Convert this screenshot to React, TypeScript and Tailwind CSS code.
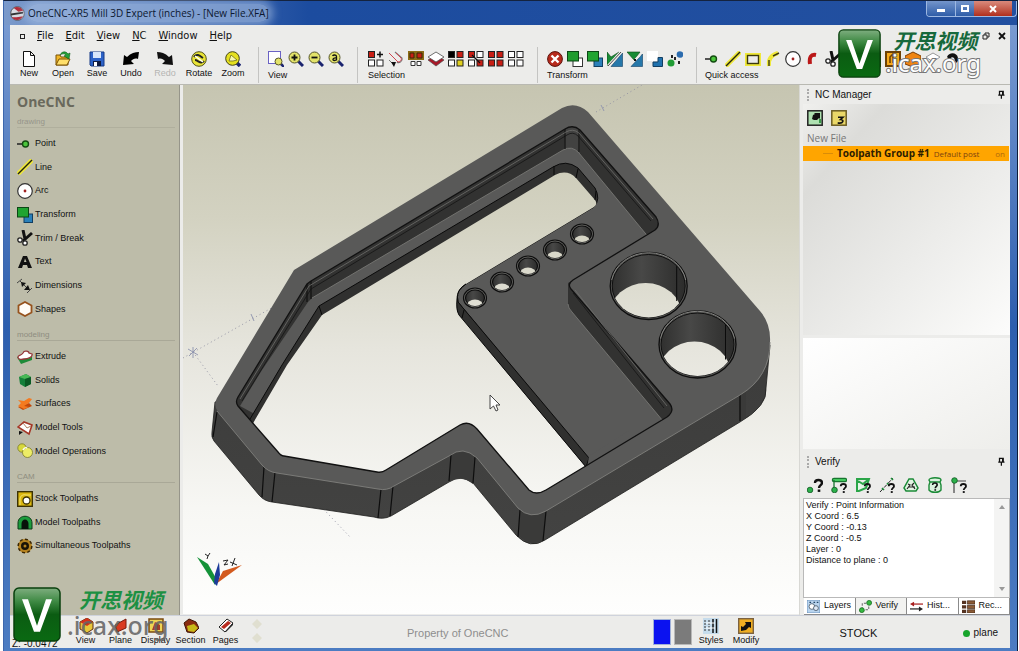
import { ReactNode, useState } from 'react';
import clsx from 'clsx';

const grid2 = (colors: string[]) => (
  <g stroke="#222" strokeWidth="1">
    <rect x=".5" y=".5" width="6" height="6" fill={colors[0]} />
    <rect x="9" y=".5" width="6" height="6" fill={colors[1]} />
    <rect x=".5" y="9" width="6" height="6" fill={colors[2]} />
    <rect x="9" y="9" width="6" height="6" fill={colors[3]} />
  </g>
);

const magnifier = (
  <>
    <path d="M10 10l5 5" stroke="#1b2470" strokeWidth="3" />
    <circle cx="6.5" cy="6.5" r="5.5" fill="#e3e36a" stroke="#55552a" />
  </>
);

const RED = '#c81e14';

const icons: Record<string, ReactNode> = {
  new: <path d="M2.5.5h7l4 4v11h-11zM9.500.5v4h4" fill="#fff" stroke="#111" />,
  open: (
    <>
      <path d="M1 14V4h4l1 2h7v8z" fill="#f0b628" stroke="#7a5205" />
      <path d="M1 14l3-6h11l-3 6z" fill="#ffdf6a" stroke="#7a5205" />
      <path d="M5 4c2-4 6-4 8-1l2-1-1 6-5-3 2-1c-2-2-4-1-6 0z" fill="#25a338" stroke="#0d5c1a" strokeWidth=".6" />
    </>
  ),
  save: (
    <>
      <path d="M1 1h14v14H2l-1-1z" fill="#2c62c8" stroke="#173a86" />
      <path d="M4 1h8v6H4z" fill="#d8e6fb" />
      <path d="M4 10h8v5H4z" fill="#101c40" />
      <path d="M5 11h3v4H5z" fill="#fff" />
    </>
  ),
  undo: <path d="M0 14L1 4l3 2c4-4 8-5 12-5l-1 7c-3-1-5 0-7 2l3 3z" fill="#000" />,
  redo: <path d="M16 14L15 4l-3 2C8 2 4 1 0 1l1 7c3-1 5 0 7 2l-3 3z" fill="#111" />,
  rotate: (
    <>
      <circle cx="8" cy="8" r="7.300" fill="#e8e336" stroke="#54531a" />
      <path d="M3 6c3-4 6-1 9 1M4 9c3 0 6 5 9 1" fill="none" stroke="#222" strokeWidth="2" />
      <path d="M4 5l8 6" stroke="#fff" strokeWidth="1.500" />
    </>
  ),
  zoom: (
    <>
      <path d="M10 10l5 5" stroke="#1b2470" strokeWidth="3.500" />
      <circle cx="7.500" cy="7.500" r="6.800" fill="#e5e020" stroke="#444416" />
      <path d="M4 10l2-6 6 5-4 1z" fill="#f8f8b0" stroke="#70701d" strokeWidth=".8" />
    </>
  ),
  zoomWindow: (
    <>
      <rect x=".5" y=".5" width="12" height="12" fill="#fff" stroke="#6a62c4" />
      <path d="M12 12l4 4" stroke="#1b2470" strokeWidth="2.500" />
      <circle cx="10.500" cy="10.500" r="3.500" fill="#e3e36a" stroke="#55552a" />
    </>
  ),
  zoomIn: <>{magnifier}<path d="M3.500 6.500h6M6.500 3.500v6" stroke="#111" strokeWidth="1.800" /></>,
  zoomOut: <>{magnifier}<path d="M3.500 6.500h6" stroke="#111" strokeWidth="1.800" /></>,
  zoomAll: (
    <>
      {magnifier}
      <path d="M4.500 5c1-1.500 4-1.300 4 .5v4M8.500 7c-4-.6-4.500 2.500-2 2.500 1 0 2-.7 2-1.500" fill="none" stroke="#111" strokeWidth="1.300" />
    </>
  ),
  selAdd: (
    <>
      {grid2([RED, 'none', '#fff', '#fff'])}
      <path d="M8 0h8v8H8z" fill="#ececea" />
      <path d="M9 3.500h6M12 .5v6" stroke="#111" strokeWidth="1.500" />
    </>
  ),
  selChain: (
    <>
      <path d="M7 1l7 6c1 3-3 6-5 4" fill="none" stroke="#777" strokeWidth="1.200" />
      <path d="M1 2l9 9c3 0 4-3 3-4L8 2" fill="none" stroke="#cf4450" />
      <path d="M1 9l4 4" stroke="#777" />
      <path d="M3 11l5 0-2 5z" fill="#111" />
    </>
  ),
  selGroup: (
    <>
      <rect x="0" y="0" width="16" height="9" fill="#8a6b16" />
      <path d="M2 2h4v5H2zM9 2h5v5H9z" fill={RED} stroke="#3a2906" />
      <path d="M3 10.500h4v4H3zM9 10.500h4v4H9z" fill="#fff" stroke="#333" />
    </>
  ),
  selLayer: (
    <>
      <path d="M0 9l8 6 8-6-8-5z" fill="#a91827" stroke="#4d4d4d" strokeWidth=".7" />
      <path d="M0 6l8 5 8-5-8-5z" fill="#fff" stroke="#4d4d4d" strokeWidth=".8" />
    </>
  ),
  selColor: grid2(['#000', RED, '#fff', '#e0d020']),
  selInvert: <>{grid2([RED, '#fff', '#fff', RED])}<path d="M4 4l8 8" stroke="#111" strokeWidth="1.300" /></>,
  selAll: grid2([RED, RED, RED, RED]),
  selNone: grid2(['#fff', '#fff', '#fff', '#fff']),
  cancel: (
    <>
      <circle cx="8" cy="8" r="7.400" fill="#b72a1c" stroke="#5b120b" />
      <path d="M4.500 4.500l7 7m0-7l-7 7" stroke="#fff" strokeWidth="2.400" />
    </>
  ),
  move: (
    <>
      <rect x="6" y="7" width="9.500" height="8.500" fill="#fff" stroke="#333" />
      <rect x=".5" y=".5" width="11" height="9.500" fill="#1f9c2e" stroke="#0c4715" />
    </>
  ),
  copy: (
    <>
      <rect x="7" y="7" width="8.500" height="8.500" fill="#2a80ba" stroke="#123e62" />
      <rect x=".5" y=".5" width="11" height="9.500" fill="#20a431" stroke="#0c4715" />
    </>
  ),
  mirror: (
    <>
      <path d="M0 15V1l4 5 8-5z" fill="#178b35" stroke="#0c4715" strokeWidth=".6" />
      <path d="M4 15.500L15.500 2v13.500z" fill="#2678aa" stroke="#123e62" strokeWidth=".6" />
      <path d="M1 15L14 1" stroke="#ececea" strokeWidth="2.600" />
      <path d="M1 15L14 1" stroke="#222" strokeWidth=".8" />
    </>
  ),
  mirrorCopy: (
    <>
      <path d="M0 1h13L7 9z" fill="#178b35" stroke="#0c4715" strokeWidth=".6" />
      <path d="M4 15.500L15.500 3v12.500z" fill="#2678aa" stroke="#123e62" strokeWidth=".6" />
      <path d="M3 14L13 4" stroke="#ececea" strokeWidth="2" />
      <path d="M7 8h2v2H7z" fill="#111" />
    </>
  ),
  scale: (
    <>
      <rect x="0" y="0" width="11" height="10" fill="#fff" />
      <path d="M6 15.500V11h5V6.500h4.500v9z" fill="#2072ae" stroke="#123e62" />
    </>
  ),
  array: (
    <>
      <circle cx="4" cy="12" r="3.500" fill="#219c35" />
      <circle cx="13" cy="3.500" r="3.300" fill="#2c6cae" />
      <path d="M4 4h2v3H4zM11 10h2v3h-2zM7 6h2v3H7z" fill="#222" />
    </>
  ),
  point: (
    <>
      <path d="M0 8h7" stroke="#222" strokeWidth="1.500" />
      <circle cx="8.500" cy="8" r="3" fill="#4cc63c" stroke="#154d12" strokeWidth="1.400" />
    </>
  ),
  line: (
    <>
      <path d="M1 15L15 1" stroke="#efe83a" strokeWidth="4.500" />
      <path d="M1 15L15 1" stroke="#25250c" strokeWidth="1.500" />
    </>
  ),
  rect: (
    <>
      <rect x="2" y="4" width="12" height="9" fill="none" stroke="#efe83a" strokeWidth="4" />
      <rect x="2.500" y="4.500" width="11" height="8" fill="#ececea" stroke="#3c3a0c" strokeWidth="1.400" />
    </>
  ),
  fillet: (
    <>
      <path d="M4 15C3 8 6 4 13 2" fill="none" stroke="#efe83a" strokeWidth="4" />
      <path d="M4 15V9M8 5l6-3" stroke="#3c3a0c" strokeWidth="1.400" />
    </>
  ),
  arc: (
    <>
      <circle cx="8" cy="8" r="7.300" fill="#fff" stroke="#333" strokeWidth="1.200" />
      <circle cx="8" cy="8" r="1.400" fill="#a02020" />
    </>
  ),
  curve: <path d="M5 13C4 6 6 3 11 4" fill="none" stroke="#bb1818" strokeWidth="4" />,
  trim: (
    <>
      <path d="M6 0l2 9M15 3l-9 8" stroke="#111" strokeWidth="3" />
      <circle cx="3" cy="10" r="2.200" fill="#fff" stroke="#222" strokeWidth="1.300" />
      <circle cx="8" cy="13" r="2.200" fill="#fff" stroke="#222" strokeWidth="1.300" />
    </>
  ),
  textA: <path d="M1 14L6 2h4l5 12h-4l-1-3H6l-1 3zM7 8h2.500L8 4.500z" fill="#111" fillRule="evenodd" />,
  dims: (
    <>
      <path d="M0 5l5-4M10 15l5-5M3 3l9 9" stroke="#444" strokeWidth="1" />
      <path d="M4 4l5 1-4 4zM13 12l-6 0 4-5z" fill="#111" />
    </>
  ),
  hex: <path d="M8 1l6.500 3.500v7L8 15l-6.500-3.500v-7z" fill="#fffdf8" stroke="#96521c" strokeWidth="1.800" />,
  extrude: (
    <>
      <path d="M0 8l4 7 11-4V6z" fill="#1e8b38" />
      <path d="M1 8c0-2 3-1 5-4 1-3 6-2 6 0l3 1c1 3-4 5-8 5-4 1-6 0-6-2z" fill="#fff" stroke="#96383a" strokeWidth="1.300" />
    </>
  ),
  solid: (
    <>
      <path d="M2 5l7-3 5 3v7l-6 3-5-3z" fill="#15803a" />
      <path d="M2 5l7-3 5 3-6 2z" fill="#49b856" />
      <path d="M8 7l6-2v7l-6 3z" fill="#0b5a24" />
    </>
  ),
  surface: (
    <>
      <path d="M1 11l5 3 9-4-3-3z" fill="#c2480a" />
      <path d="M1 4l6 1 5-3 3 1-3 4-5 3 5 1-5 2-6-3 3-3z" fill="#f47a20" />
    </>
  ),
  modelTools: (
    <>
      <path d="M1 7l6-5 8 3-3 9z" fill="#fff" stroke="#a43828" strokeWidth="1.600" />
      <path d="M6 3l4 5 4-2" fill="none" stroke="#b08060" />
      <path d="M2 11l4 1-4 3z" fill="#111" />
    </>
  ),
  modelOps: (
    <>
      <circle cx="5" cy="5" r="4.200" fill="#d7d83e" stroke="#7b7b28" strokeWidth=".8" />
      <circle cx="10.500" cy="9.500" r="5" fill="#eded66" stroke="#7b7b28" strokeWidth=".8" />
      <path d="M6 7c1-2 2-3 4-2" fill="none" stroke="#fff" strokeWidth="1.500" />
    </>
  ),
  stock: (
    <>
      <rect x=".7" y=".7" width="14.600" height="14.600" fill="#dcb80e" stroke="#3c3205" strokeWidth="1.400" />
      <path d="M3 14V8c0-3 3-5 6-4h5" fill="none" stroke="#f4e478" />
      <circle cx="9.500" cy="9.500" r="3.500" fill="#fff" stroke="#3c3205" strokeWidth="1.300" />
    </>
  ),
  arch: (
    <>
      <path d="M1 15V9C1 0 15 0 15 9v6z" fill="#1c9c3c" stroke="#0d3b18" />
      <path d="M4.500 15V10c0-6 7-6 7 0v5z" fill="#08120a" />
    </>
  ),
  simul: (
    <>
      <circle cx="8" cy="8" r="5.500" fill="#1a1206" stroke="#b58220" strokeWidth="3" />
      <circle cx="8" cy="8" r="6.800" fill="none" stroke="#3a2604" strokeWidth="1.500" strokeDasharray="3 2.300" />
      <circle cx="8" cy="8" r="1.500" fill="#b58220" />
    </>
  ),
  job: (
    <>
      <rect x="1" y="1" width="14" height="14" fill="#f5a91a" stroke="#6d4205" strokeWidth="2" />
      <path d="M5 12V6l3-3v9" fill="none" stroke="#6d4205" strokeWidth="1.600" />
    </>
  ),
  yellowBox: <rect x="1" y="1" width="14" height="14" fill="#f2d41c" stroke="#5a4a05" strokeWidth="2" />,
  orangeCube: <path d="M8 1l8 4v8l-8 3-8-3V5z" fill="#ef8412" stroke="#7c3d03" />,
  whiteCube: <path d="M8 2l7 4-7 5-7-5z" fill="#fff" stroke="#999" />,
  hook: <path d="M2 6c2-5 10-5 11 1l2 1-4 4-2-5c-2-2-4 0-4 2z" fill="#111" />,
  ncGo: (
    <>
      <rect x=".8" y=".8" width="14.400" height="14.400" fill="#aee0b0" stroke="#222" strokeWidth="1.500" />
      <path d="M5 9l1-4 2-1-1-1h6v6l-1-1-2 2H7z" fill="#111" />
      <path d="M12 13V9h2v4z" fill="#3a9a4a" />
    </>
  ),
  nc3: (
    <>
      <rect x=".8" y=".8" width="14.400" height="14.400" fill="#ead868" stroke="#6a5c22" strokeWidth="1.500" />
      <path d="M7 7.200h5l-2.500 2.300c4 .3 3 4.500-2.800 3.400" fill="none" stroke="#111" strokeWidth="1.600" />
    </>
  ),
  viewCube: (
    <>
      <path d="M2 4l7-4 6 4v7l-6 4-7-4z" fill="#e9c63a" stroke="#5c2a10" />
      <path d="M2 4l7-4 6 4-6 4z" fill="#d4301a" />
    </>
  ),
  plane: <path d="M2 7l11-6v9L4 14z" fill="#d93a20" stroke="#7a1a0c" />,
  display: (
    <>
      <rect x="1" y="1" width="14" height="13" fill="#efd455" stroke="#7a4a10" strokeWidth="1.500" />
      <path d="M4 12l3-8 5 3v5z" fill="#a33c2c" />
    </>
  ),
  section: (
    <>
      <path d="M1 5l5-4 7 3 3 6-5 5-7-1z" fill="#8a2c10" stroke="#3f1604" />
      <path d="M4 8l7-2 4 4-4 4-6-1z" fill="#c8b818" />
    </>
  ),
  pages: (
    <>
      <path d="M1 9l8-8 6 4-8 9z" fill="#fff" stroke="#222" />
      <path d="M3 9l7-6 3 2-7 6z" fill="#b82c20" />
      <path d="M8 14l7-7v-2l-8 9z" fill="#222" />
    </>
  ),
  styles: (
    <>
      <rect x="0" y="0" width="16" height="16" fill="#c6dcec" />
      <path d="M2 2v12M6 2v12" stroke="#333" strokeDasharray="2 1" />
      <path d="M10 1v14M13.500 1v14" stroke="#111" strokeWidth="1.500" />
      <path d="M3 5h9M3 10h9" stroke="#fff" />
    </>
  ),
  modify: (
    <>
      <rect x=".7" y=".7" width="14.600" height="14.600" fill="#f0ae22" stroke="#7c6240" strokeWidth="1.400" />
      <path d="M3 13V8l2 1 3-3-1-2h6v6l-2-1-3 3z" fill="#111" />
    </>
  ),
  pin: <path d="M3 2h8M4 2v6M10 2v6M9 2v6M2 8h10M7 8v6" stroke="#111" strokeWidth="2" fill="none" />,
  vPoint: <circle cx="3" cy="13" r="2.800" fill="#2bb04a" stroke="#0e5520" strokeWidth=".8" />,
  vWidth: (
    <>
      <path d="M3 3h11" stroke="#17752f" strokeWidth="4.500" strokeLinecap="round" />
      <path d="M3 3h11" stroke="#45c95f" strokeWidth="2" strokeLinecap="round" />
      <path d="M3 3v10" stroke="#17752f" strokeWidth="1.300" />
      <circle cx="3.500" cy="13" r="2.800" fill="#2bb04a" stroke="#0e5520" strokeWidth=".8" />
    </>
  ),
  vArea: <path d="M2 2h12l-3 9-7 3H2zM3 4l5 3 6-5" fill="#e6f6e8" stroke="#2aa548" strokeWidth="2" />,
  vLine: (
    <>
      <path d="M1 15L14 1" stroke="#222" strokeDasharray="4 2" />
      <path d="M3 11l2 2M8 6l2 2M12 1l2 2" stroke="#1b8a37" strokeWidth="1.600" />
    </>
  ),
  vTri: (
    <>
      <path d="M6 2h4l5 9-2 3H3l-2-3z" fill="#e4f5e5" stroke="#1b8a37" strokeWidth="1.500" />
      <path d="M4 12l3-4-2-1M12 12l-3-4 2-2M6 10h6" stroke="#222" fill="none" strokeWidth="1.200" />
    </>
  ),
  vCyl: <path d="M2 3c0-3 12-3 12 0l-1 2 1 3v5c-2 3-10 3-12 0V8l1-3zM3 5h10" fill="#dcf2de" stroke="#1b8a37" strokeWidth="1.400" />,
  vAxis: (
    <>
      <path d="M3 16V4h12" stroke="#444" fill="none" strokeWidth="1.200" />
      <circle cx="3.500" cy="3.500" r="2.800" fill="#2bb04a" stroke="#0e5520" strokeWidth=".8" />
    </>
  ),
  tabLayers: (
    <>
      <rect x="0" y="0" width="16" height="16" fill="#b9d4ee" stroke="#5f88b4" />
      <circle cx="6" cy="8" r="3.500" fill="#fff" stroke="#456" />
      <circle cx="11" cy="10" r="3" fill="#dfe9f5" stroke="#456" />
      <path d="M3 3h2M8 3h2M12 3h2" stroke="#246" strokeWidth="1.500" />
    </>
  ),
  tabVerify: (
    <>
      <path d="M4 12V4h8v8z" fill="none" stroke="#444" strokeDasharray="3 2" />
      <circle cx="3.500" cy="12.500" r="3" fill="#35b83f" stroke="#176b20" />
      <circle cx="12.500" cy="3.500" r="3" fill="#35b83f" stroke="#176b20" />
    </>
  ),
  tabHist: (
    <>
      <path d="M3 5h13" stroke="#a81e1e" strokeWidth="1.500" />
      <path d="M0 5l5-3v6z" fill="#a81e1e" />
      <path d="M0 11h13" stroke="#222" strokeWidth="1.500" />
      <path d="M16 11l-5-3v6z" fill="#222" />
    </>
  ),
  tabRec: (
    <>
      <path d="M0 1h5v4H0zM0 6.500h5v4H0zM0 12h5v4H0z" fill="#553322" />
      <path d="M6.500 1H16v4H6.500zM6.500 6.500H16v4H6.500zM6.500 12H16v4H6.500z" fill="#8a5a36" stroke="#3a2214" strokeWidth=".8" />
    </>
  )
};

const questionMark = (x: number, y: number, s: number) => (
  <g transform={`translate(${x} ${y}) scale(${s})`}>
    <path d="M1 3C1-1 8-1 8 3c0 2-3 2.500-3 5" fill="none" stroke="#111" strokeWidth="2.400" />
    <rect x="3.700" y="9.500" width="2.600" height="2.400" fill="#111" />
  </g>
);

const Icon = ({ name, className = 'size-4' }: { name: string; className?: string }) => (
  <svg viewBox="0 0 16 16" className={clsx('block shrink-0', className)} aria-hidden="true">
    {icons[name]}
    {name === 'vPoint' && questionMark(7, 3, 1)}
    {(name === 'vWidth' || name === 'vArea' || name === 'vLine' || name === 'vAxis') && questionMark(9, 7, 0.75)}
    {name === 'vCyl' && questionMark(5, 6, 0.65)}
  </svg>
);

const fileTools = [
  { label: 'New', icon: 'new' },
  { label: 'Open', icon: 'open' },
  { label: 'Save', icon: 'save' },
  { label: 'Undo', icon: 'undo' },
  { label: 'Redo', icon: 'redo', disabled: true },
  { label: 'Rotate', icon: 'rotate' },
  { label: 'Zoom', icon: 'zoom' }
];

const menus = ['File', 'Edit', 'View', 'NC', 'Window', 'Help'];

const sidebarRows: { heading?: string; label?: string; icon?: string }[] = [
  { label: 'Point', icon: 'point' },
  { label: 'Line', icon: 'line' },
  { label: 'Arc', icon: 'arc' },
  { label: 'Transform', icon: 'copy' },
  { label: 'Trim / Break', icon: 'trim' },
  { label: 'Text', icon: 'textA' },
  { label: 'Dimensions', icon: 'dims' },
  { label: 'Shapes', icon: 'hex' },
  { heading: 'modeling' },
  { label: 'Extrude', icon: 'extrude' },
  { label: 'Solids', icon: 'solid' },
  { label: 'Surfaces', icon: 'surface' },
  { label: 'Model Tools', icon: 'modelTools' },
  { label: 'Model Operations', icon: 'modelOps' },
  { heading: 'CAM' },
  { label: 'Stock Toolpaths', icon: 'stock' },
  { label: 'Model Toolpaths', icon: 'arch' },
  { label: 'Simultaneous Toolpaths', icon: 'simul' }
];

const verifyLines = [
  'Verify : Point Information',
  'X Coord : 6.5',
  'Y Coord : -0.13',
  'Z Coord : -0.5',
  'Layer : 0',
  'Distance to plane : 0'
];

const ToolGroup = ({ label, items }: { label: string; items: string[] }) => (
  <div>
    <div className="flex gap-1">
      {items.map((item) => (
        <button key={item} type="button" aria-label={item}>
          <Icon name={item} />
        </button>
      ))}
    </div>
    <div className="mt-[3px] leading-[10px]">{label}</div>
  </div>
);

const Separator = ({ className }: { className?: string }) => (
  <div className={clsx('h-9 w-px shrink-0 bg-[#c4c4c2]', className)} />
);

const smallHoles = [
  [475, 298],
  [502, 282],
  [528, 266],
  [555, 250],
  [582, 234]
];

const bigHoles = [
  [648.7, 286],
  [697.5, 344.5]
];

const ModelView = () => (
  <svg viewBox="183 85 616 529" className="block h-auto w-full" role="img" aria-label="Part model">
    <defs>
      <linearGradient id="sky" gradientUnits="userSpaceOnUse" x1="0" y1="85" x2="0" y2="614">
        <stop offset="0" stopColor="#c6c5b1" />
        <stop offset=".25" stopColor="#d3d2c1" />
        <stop offset=".5" stopColor="#e6e5dd" />
        <stop offset=".8" stopColor="#f7f7f4" />
        <stop offset="1" stopColor="#fefefd" />
      </linearGradient>
      <linearGradient id="bore" x1="0" x2="1" y1="0" y2="0">
        <stop offset="0" stopColor="#30302f" />
        <stop offset=".4" stopColor="#484847" />
        <stop offset="1" stopColor="#2c2c2b" />
      </linearGradient>
      <linearGradient id="side" x1="0" x2="0" y1="0" y2="1">
        <stop offset="0" stopColor="#3a3a39" />
        <stop offset="1" stopColor="#434342" />
      </linearGradient>
      <clipPath id="pocket">
        <path d="M311 281L565 129Q573 124 580 130L656 217Q661 225 655 230L573 280Q567 284 571 289L670 404Q675 411 667 417L546 490Q536 496 529 490L477 429Q469 420 460 425L386 470Q382 473 377 472L284 456Q281 456 278 452L238 406Q235 402 238 397L307 284Z" />
      </clipPath>
      {bigHoles.map(([x, y], i) => (
        <clipPath key={i} id={`big${i}`}>
          <ellipse cx={x} cy={y} rx="36.5" ry="31.500" />
        </clipPath>
      ))}
      {smallHoles.map(([x, y], i) => (
        <clipPath key={i} id={`small${i}`}>
          <ellipse cx={x} cy={y} rx="9.500" ry="8" />
        </clipPath>
      ))}
    </defs>
    <rect x="183" y="85" width="616" height="529" fill="url(#sky)" />

    {/* construction axes */}
    <g stroke="#8f8fa0" strokeWidth=".9" strokeDasharray="1 3" fill="none">
      <path d="M183 358L275 306M193 352L218 386M596 112L642 85M310 495L351 538" />
    </g>
    <path d="M188 349l10 6M189 356l8-8M193 347v11M251 314l3 7M601 105l3 6" stroke="#8d93ae" strokeWidth=".9" />

    {/* outer walls */}
    <path
      d="M215 402L212 432Q211 437 214 441L259 495Q264 501 272 502L374 517Q383 520 391 516L449 482Q461 474 473 483L516 535Q530 550 545 540L740 422Q768 406 766 388L770 345L700 300Z"
      fill="url(#side)"
      stroke="#1f1f1e"
      strokeWidth=".8"
    />
    <path d="M739 394l7-4v28l-7 4zM520 509l26 3-3 29q-13 6-24-5zM451 455q11-9 23 2l-1 27q-12-10-24-2z" fill="#3a3a39" />
    <path
      d="M217 412L213 437M264 467L262 497M275 472L272 502M381 489L378 518M393 486L390 516M451 455L449 481M475 457L473 483M520 510L518 537M546 511L543 541M740 395V421"
      stroke="#0d0d0d"
      strokeWidth="1.200"
    />

    {/* top face */}
    <path
      d="M294 270L562 108Q576 101 588 112L760 311Q771 324 770 342Q771 377 740 395L546 511Q530 520 518 508L477 458Q463 445 449 456L394 486Q387 491 378 489L277 473Q268 472 262 465L218 412Q213 405 217 398Z"
      fill="#595958"
    />
    <path
      d="M217 411L262 465Q268 472 277 473L378 489Q387 491 394 486L449 456Q463 445 477 458L518 508Q530 520 546 511L740 395Q770 377 770 342"
      fill="none"
      stroke="#80807d"
      strokeWidth=".9"
    />

    {/* pocket walls, ledge and through opening */}
    <g clipPath="url(#pocket)">
      <rect x="183" y="85" width="616" height="529" fill="#323231" />
      <path d="M565 126l7-2 8 6v24l-16-2z" fill="#424241" />
      <path
        d="M312 298L563 150Q572 145 579 153L650 239L568 283V304Q568 308 572 312L663 421L585 468L450 520L240 406L262 370L308 302Z"
        fill="#595958"
      />
      <path d="M312 298L563 150Q572 145 579 153L650 239M568 304Q568 308 572 312L663 421" fill="none" stroke="#777774" strokeWidth=".9" />
      <path
        d="M319 306L553 167Q566 159 578 168L595 188Q601 199 594 207L466 284Q455 291 458 302L462 307L589 460L592 500L540 530L250 500L240 436L253 414L282 365Z"
        fill="#30302f"
        stroke="#0b0b0b"
        strokeWidth="1"
      />
      <path
        d="M322 315L555 175Q567 169 576 178L595 200Q598 204 594 207L466 284Q455 291 457 311L500 364L585 466L592 500L540 530L240 500L252 425L287 365Z"
        fill="url(#sky)"
      />
      <path d="M466 284Q455 291 458 302L589 458L586 467L459 315Q456 310 457 299Q457 289 466 284" fill="#30302f" stroke="#0b0b0b" strokeWidth="1" />
      {/* floor corner that meets the rim, right of the slot wall */}
      <path d="M589 456L630 430V450L586 475Z" fill="#595958" />
      <path d="M554 166v9M578 169l-2 9M596 191l-1 9M319 306l3 9M311 281v18M307 284v18M565 129v20M579 130v22M464 310l-2 8" stroke="#080808" strokeWidth="1" />
    </g>
    <path
      d="M311 281L565 129Q573 124 580 130L656 217Q661 225 655 230L573 280Q567 284 571 289L670 404Q675 411 667 417L546 490Q536 496 529 490L477 429Q469 420 460 425L386 470Q382 473 377 472L284 456Q281 456 278 452L238 406Q235 402 238 397L307 284Z"
      fill="none"
      stroke="#111"
      strokeWidth="1.300"
    />
    <path d="M240 399L309 286L566 132Q573 128 579 133L653 219M575 290L667 406" fill="none" stroke="#6f6f6c" strokeWidth=".8" />
    <path d="M242 401L311 289L567 135Q573 131 578 136L651 221M573 293L664 408" fill="none" stroke="#141414" strokeWidth=".8" />

    {bigHoles.map(([x, y], i) => (
      <g key={i}>
        <ellipse cx={x} cy={y} rx="38.500" ry="33.500" fill="#555553" stroke="#0e0e0e" strokeWidth="1.300" />
        <path d={`M${x - 37} ${y - 6}A37.500 32.500 0 0 1 ${x + 37} ${y - 6}`} fill="none" stroke="#858582" strokeWidth="1" />
        <ellipse cx={x} cy={y} rx="36.500" ry="31.500" fill="url(#bore)" stroke="#0e0e0e" strokeWidth="1" />
        <g clipPath={`url(#big${i})`}>
          <ellipse cx={x - 3} cy={y + 29} rx="36" ry="32" fill="url(#sky)" />
          <path d={`M${x + 28} ${y - 22}v37`} stroke="#0b0b0b" />
        </g>
      </g>
    ))}
    {smallHoles.map(([x, y], i) => (
      <g key={i}>
        <ellipse cx={x} cy={y} rx="11.500" ry="10" fill="#666663" stroke="#0e0e0e" strokeWidth="1.200" />
        <ellipse cx={x} cy={y} rx="9.500" ry="8" fill="url(#bore)" stroke="#0e0e0e" strokeWidth="1.200" />
        <ellipse cx={x} cy={y + 8} rx="8.500" ry="6.500" fill="url(#sky)" clipPath={`url(#small${i})`} />
      </g>
    ))}

    {/* mouse pointer */}
    <path d="M490 395v14l3.500-3 2.500 5 2-1-2-5h4z" fill="#fff" stroke="#333" strokeWidth=".9" />

    {/* axis tripod */}
    <path d="M197 557L208 564 217 580 215 585z" fill="#149238" />
    <path d="M242 565L223 571 216 584z" fill="#d35a1e" />
    <path d="M219 562L215 574 214 583 217 586 220 575z" fill="#1c3b9a" />
    <path d="M205 554l3 2 2-3M208 556l-1 3M223 561l5-1-4 5 4-1M230 562l7 3M235 558l-3 8" fill="none" stroke="#222" strokeWidth="1" />
  </svg>
);

const Watermark = ({ variant }: { variant: 'top' | 'bottom' }) => {
  const top = variant === 'top';
  return (
    <div
      className={clsx(
        'pointer-events-none absolute flex items-start',
        top ? 'top-7 right-9 gap-1' : 'bottom-[9px] left-[9px] gap-[6px]'
      )}
    >
      <svg viewBox="0 0 48 54" className={top ? 'h-[49px] w-[43px]' : 'h-[55px] w-12'} preserveAspectRatio="none" aria-hidden="true">
        <defs>
          <linearGradient id={`badge-${variant}`} x1="0" x2="0" y1="0" y2="1">
            <stop offset="0" stopColor="#7fae80" />
            <stop offset=".25" stopColor="#3f8a44" />
            <stop offset=".5" stopColor="#0b5c12" />
            <stop offset="1" stopColor="#0a6a12" />
          </linearGradient>
        </defs>
        <rect x="1" y="1" width="46" height="52" rx="5" fill={`url(#badge-${variant})`} stroke="#083f0c" strokeWidth="1.500" />
        <path d="M9 12h6l9 26 9-26h6L27 44h-6z" fill="#fff" />
      </svg>
      <div className="font-['Noto_Sans','Noto_Sans_CJK_SC',sans-serif] whitespace-nowrap">
        <div
          className={clsx(
            'text-[21px] font-bold italic',
            top ? 'pl-2 leading-[24px] text-[#17693c]' : 'pl-3 leading-[26px] text-[#1d9043]'
          )}
        >
          开思视频
        </div>
        <div
          className={clsx(
            top
              ? 'text-[24px] leading-[20px] text-white [-webkit-text-stroke:2px_#777] [paint-order:stroke_fill]'
              : 'text-[25px] leading-[24px] font-medium text-[#666]/90'
          )}
        >
          .icax.org
        </div>
      </div>
    </div>
  );
};

const PanelHeader = ({ title }: { title: string }) => (
  <div className="flex h-[19px] items-center pr-[3px] pl-1 text-[10px]">
    <span className="mr-[6px] h-3 border-l-2 border-dotted border-[#aaa]" />
    <h2 className="flex-1">{title}</h2>
    <button type="button" aria-label={`Pin ${title}`}>
      <Icon name="pin" className="size-[10px]" />
    </button>
  </div>
);

const statusTools = [
  { label: 'View', icon: 'viewCube' },
  { label: 'Plane', icon: 'plane' },
  { label: 'Display', icon: 'display' },
  { label: 'Section', icon: 'section' },
  { label: 'Pages', icon: 'pages' }
];

const StatusButton = ({ label, icon }: { label: string; icon: string }) => (
  <button type="button" className="flex w-[35px] flex-col items-center">
    <Icon name={icon} />
    <span className="leading-[12px]">{label}</span>
  </button>
);

const tabs = [
  { label: 'Layers', icon: 'tabLayers' },
  { label: 'Verify', icon: 'tabVerify' },
  { label: 'Hist...', icon: 'tabHist' },
  { label: 'Rec...', icon: 'tabRec' }
];

const App = () => {
  const [activeTab, setActiveTab] = useState('Verify');

  return (
    <div className="bg-white pr-px pl-[3px] font-['Liberation_Sans',sans-serif] text-[9px] text-[#111]">
      <div className="relative flex min-h-screen flex-col border-t border-r border-l border-t-[#14233f] border-r-[#0e1c38] border-l-[#3d67ad] bg-linear-to-b from-[#7f9fd4] via-[#2c5eae] to-[#4c7cc2]">
        <header className="flex h-6 items-center bg-linear-to-r from-[#7b9acb] via-[#1c4c9f] via-[30%] to-[#2350a0] pl-[6px]">
          <svg viewBox="0 0 16 16" className="mr-[3px] size-[15px]" aria-hidden="true">
            <circle cx="8" cy="8" r="7.300" fill="#d9dce2" stroke="#555" />
            <path d="M4 2c4-2 9 0 10 3l-5 1z" fill="#b32a38" />
            <path d="M2 12c3 4 9 4 12-1l-7 1z" fill="#b32a38" />
            <path d="M1 8l13-2v2L1 10z" fill="#333" />
          </svg>
          <h1 className="rounded-full bg-[#a9bfe2]/60 font-['Open_Sans',sans-serif] text-[10px] leading-[18px] text-[#0c1830] shadow-[0_0_8px_4px_rgba(169,191,226,0.6)]">
            OneCNC-XR5 Mill 3D Expert (inches) - [New File.XFA]
          </h1>
          <div className="ml-auto flex h-4 self-start overflow-hidden rounded-b border border-t-0 border-[#9db8e2] text-white">
            <button type="button" aria-label="Minimize" className="flex w-[29px] items-end justify-center border-r border-[#9db8e2] bg-linear-to-b from-[#7495cb] to-[#2e5da8] pb-1">
              <span className="h-[3px] w-2 bg-white" />
            </button>
            <button type="button" aria-label="Restore" className="flex w-[18px] items-center justify-center bg-linear-to-b from-[#7495cb] to-[#2e5da8]">
              <span className="h-[7px] w-2 border-2 border-white" />
            </button>
            <button type="button" aria-label="Close" className="mr-1 flex w-[38px] items-center justify-center bg-linear-to-b from-[#d98a7c] to-[#b02d1c]">
              <svg viewBox="0 0 8 8" className="size-2"><path d="M1 1l6 6M7 1L1 7" stroke="#fff" strokeWidth="2" /></svg>
            </button>
          </div>
        </header>

        <div className="mr-[7px] mb-[3px] ml-[6px] flex flex-1 flex-col bg-[#ececea]">
          <nav className="flex h-[22px] items-center gap-3 pr-1 pl-[10px] font-['DejaVu_Sans_Condensed','DejaVu_Sans',sans-serif] text-[11px]">
            <span className="size-[5px] border border-[#222]" />
            {menus.map((menu) => (
              <button key={menu} type="button">
                <span className="underline">{menu[0]}</span>
                {menu.slice(1)}
              </button>
            ))}
            <button type="button" aria-label="Restore document" className="ml-auto">
              <svg viewBox="0 0 8 8" className="size-2"><path d="M3 3V1h4v4H5M1 3h4v4H1z" fill="none" stroke="#222" /></svg>
            </button>
            <button type="button" aria-label="Close document" className="-ml-1">
              <svg viewBox="0 0 8 8" className="size-2"><path d="M1 1l6 6M7 1L1 7" stroke="#111" strokeWidth="1.800" /></svg>
            </button>
          </nav>

          <div className="flex h-[38px] items-start border-b border-[#b9b9b2] pt-1 pl-[2px]">
            {fileTools.map((tool) => (
              <button key={tool.label} type="button" disabled={tool.disabled} className="flex w-[34px] flex-col items-center disabled:text-[#b5b5b3]">
                <Icon name={tool.icon} />
                <span className="leading-[12px]">{tool.label}</span>
              </button>
            ))}
            <Separator className="mr-[9px] ml-2 -mt-1" />
            <ToolGroup label="View" items={['zoomWindow', 'zoomIn', 'zoomOut', 'zoomAll']} />
            <Separator className="mr-[10px] ml-[13px] -mt-1" />
            <ToolGroup label="Selection" items={['selAdd', 'selChain', 'selGroup', 'selLayer', 'selColor', 'selInvert', 'selAll', 'selNone']} />
            <Separator className="mr-[9px] ml-[13px] -mt-1" />
            <ToolGroup label="Transform" items={['cancel', 'move', 'copy', 'mirror', 'mirrorCopy', 'scale', 'array']} />
            <Separator className="mr-2 ml-[13px] -mt-1" />
            <ToolGroup
              label="Quick access"
              items={['point', 'line', 'rect', 'fillet', 'arc', 'curve', 'trim', 'selNone', 'yellowBox', 'job', 'orangeCube', 'whiteCube', 'hook']}
            />
          </div>

          <main className="flex flex-1">
            <aside className="flex w-[170px] shrink-0 flex-col border-r border-[#96958a] bg-[#bdbca9] pr-1 pl-[7px]">
              <h2 className="pt-2 font-['Open_Sans',sans-serif] text-[14px] leading-[18px] font-bold text-[#6a695c]">OneCNC</h2>
              <h3 className="mt-[6px] mb-1 border-b border-[#b0af9d] text-[8px] leading-[10px] text-[#96958a]">drawing</h3>
              <div className="grid flex-1 auto-rows-fr pb-[57px]">
                {sidebarRows.map((row) =>
                  row.heading ? (
                    <h3 key={row.heading} className="mb-1 flex items-end border-b border-[#a9a897] text-[8px] leading-[10px] text-[#8e8d80]">
                      {row.heading}
                    </h3>
                  ) : (
                    <button key={row.label} type="button" className="flex items-center gap-[2px] text-left">
                      <Icon name={row.icon!} />
                      {row.label}
                    </button>
                  )
                )}
              </div>
            </aside>

            <section className="ml-[3px] min-w-0 flex-1 border-r border-[#d8d8d4]">
              <ModelView />
            </section>

            <aside className="ml-[3px] flex w-[207px] shrink-0 flex-col">
              <PanelHeader title="NC Manager" />
              <div className="flex h-[231px] flex-col bg-linear-to-br from-[#f0f0ee] via-[#dcdcd9] via-20% to-[#fcfcfb]">
                <div className="flex gap-2 pt-[6px] pl-1">
                  <button type="button" aria-label="Post toolpaths"><Icon name="ncGo" /></button>
                  <button type="button" aria-label="3 axis toolpaths"><Icon name="nc3" /></button>
                </div>
                <div className="mt-1 pl-1 font-['Open_Sans',sans-serif] text-[10px] leading-4 text-[#777]">New File</div>
                <button type="button" className="mr-px flex h-[15px] items-center bg-[#ffa500] pr-1 pl-5 text-left font-['Open_Sans',sans-serif] text-[8px] text-[#7d4210]">
                  <span className="mr-1 h-px w-[10px] bg-[#d98c08]" />
                  <span className="mr-1 text-[10px] font-bold text-[#2c1c00]">Toolpath Group #1</span>
                  <span>Default post</span>
                  <span className="ml-auto text-[#b06a0c]">on</span>
                </button>
              </div>
              <div className="mt-[3px] flex-1 bg-linear-to-br from-white to-[#eeeeeb]" />
              <div className="pt-[3px]">
                <PanelHeader title="Verify" />
                <div className="flex gap-2 pt-[6px] pb-[5px] pl-1">
                  {['vPoint', 'vWidth', 'vArea', 'vLine', 'vTri', 'vCyl', 'vAxis'].map((name) => (
                    <button key={name} type="button" aria-label={name.slice(1)}>
                      <Icon name={name} />
                    </button>
                  ))}
                </div>
              </div>
              <div className="flex h-[100px] border border-[#b9b9b9] bg-white">
                <div className="flex-1 pt-px pl-[2px] leading-[11px]">
                  {verifyLines.map((line) => (
                    <div key={line}>{line}</div>
                  ))}
                </div>
                <div className="flex w-[15px] flex-col items-center justify-between bg-[#f4f4f3] py-1">
                  <svg viewBox="0 0 8 8" className="size-2"><path d="M1 6l3-4 3 4z" fill="#999" /></svg>
                  <svg viewBox="0 0 8 8" className="size-2"><path d="M1 2l3 4 3-4z" fill="#999" /></svg>
                </div>
              </div>
              <div role="tablist" className="flex h-[17px] pl-px">
                {tabs.map((tab) => (
                  <button
                    key={tab.label}
                    type="button"
                    role="tab"
                    aria-selected={activeTab === tab.label}
                    onClick={() => setActiveTab(tab.label)}
                    className={clsx(
                      'flex flex-1 items-center gap-1 border-r border-b border-[#8b8b8b] pl-[3px]',
                      activeTab === tab.label ? 'bg-[#f2f2f0]' : 'bg-white'
                    )}
                  >
                    <Icon name={tab.icon} className="size-[13px]" />
                    {tab.label}
                  </button>
                ))}
              </div>
            </aside>
          </main>

          <footer className="flex h-[33px] items-start border-t border-[#cfd3dc] pt-[2px]">
            <div className="w-[58px] pt-[17px] pl-[2px] text-[10px] leading-[18px] whitespace-nowrap">Z: -0.0472</div>
            {statusTools.map((tool) => (
              <StatusButton key={tool.label} {...tool} />
            ))}
            <svg viewBox="0 0 12 26" className="ml-[8px] h-[26px] w-3" aria-hidden="true">
              <path d="M6 1l5 5-5 5-5-5zM6 15l5 5-5 5-5-5z" fill="#e0dfd0" />
            </svg>
            <div className="flex-1 pt-2 text-center text-[11px] leading-[14px] text-[#8e8e8e]">Property of OneCNC</div>
            <div className="flex items-start">
              <button type="button" aria-label="Line colour" className="mt-px mr-[3px] h-[26px] w-[18px] border border-[#9fb0d8] bg-[#0b12f0]" />
              <button type="button" aria-label="Fill colour" className="mt-px mr-[2px] h-[26px] w-[18px] border border-[#b8b8b8] bg-[#7b7b7b]" />
              <StatusButton label="Styles" icon="styles" />
              <StatusButton label="Modify" icon="modify" />
            </div>
            <div className="ml-[76px] w-[123px] pt-2 text-[11px] leading-[14px]">STOCK</div>
            <div className="flex items-center gap-1 pt-2 pr-3 text-[10px] leading-[14px]">
              <span className="size-[7px] rounded-full bg-[#17a52c]" />
              plane
            </div>
          </footer>
        </div>

        <Watermark variant="top" />
        <Watermark variant="bottom" />
      </div>
    </div>
  );
};

export default App;
